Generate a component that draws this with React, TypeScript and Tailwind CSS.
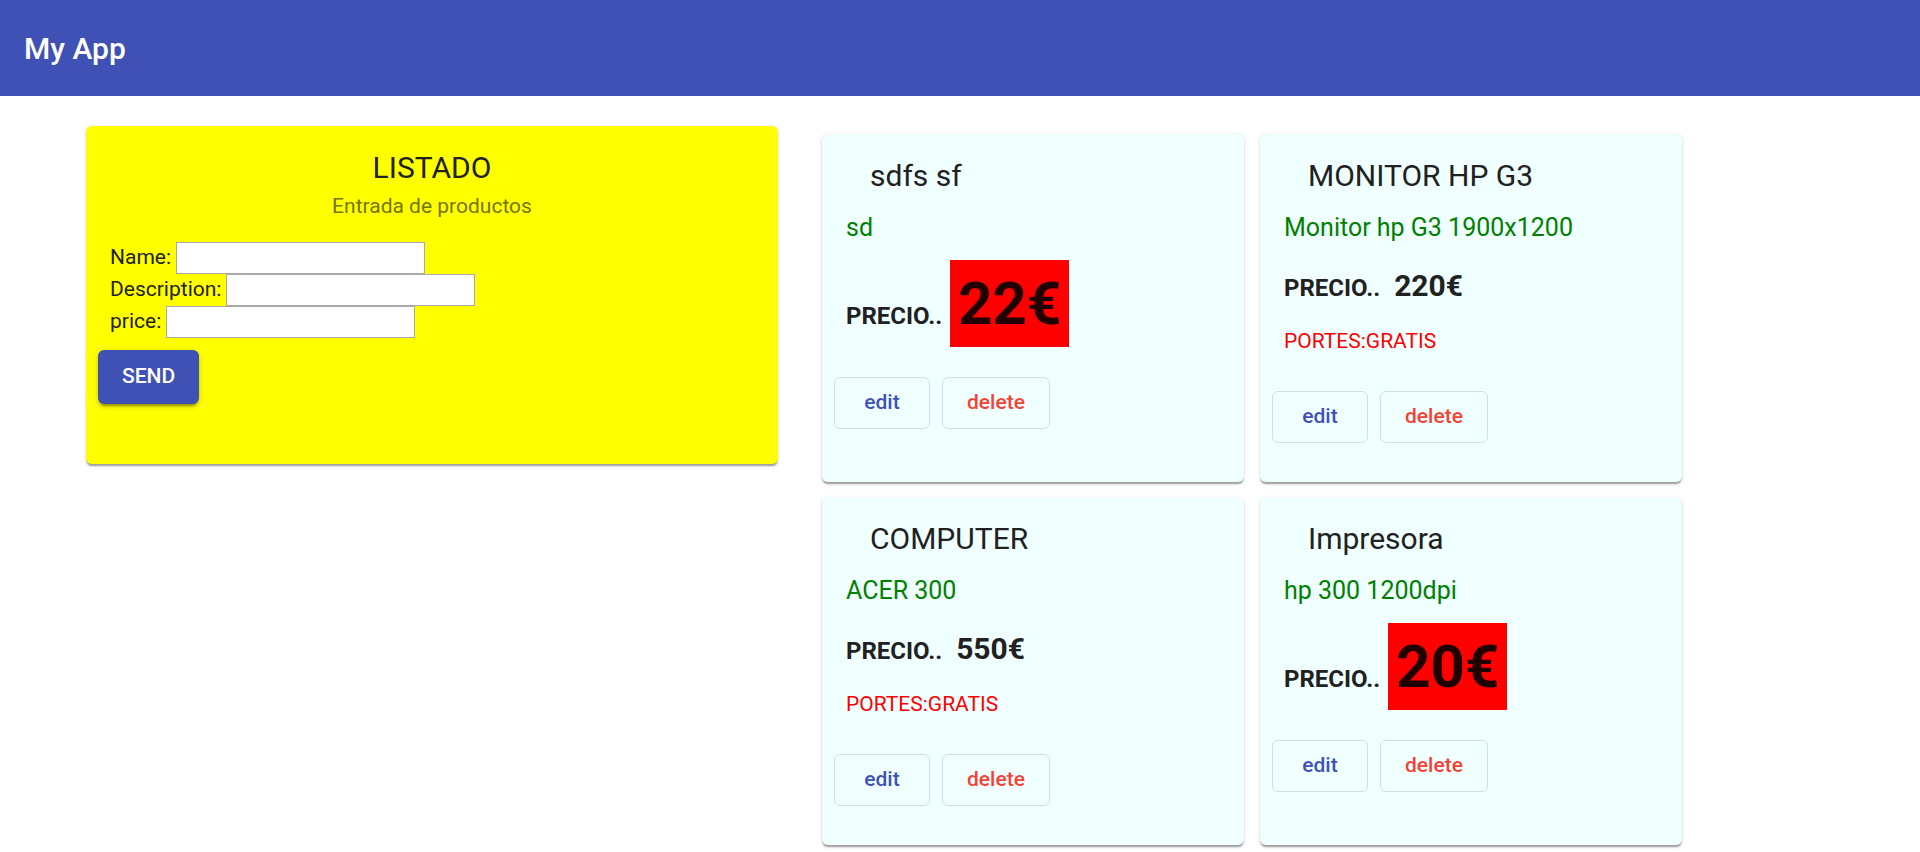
import { useState } from 'react'

type Product = {
  name: string
  description: string
  price: number
}

const initialProducts: Product[] = [
  { name: 'sdfs sf', description: 'sd', price: 22 },
  { name: 'MONITOR HP G3', description: 'Monitor hp G3 1900x1200', price: 220 },
  { name: 'COMPUTER', description: 'ACER 300', price: 550 },
  { name: 'Impresora', description: 'hp 300 1200dpi', price: 20 },
]

const ProductCard = ({ product }: { product: Product }) => {
  const cheap = product.price < 100

  return (
    <div className="flex flex-col rounded-[6px] bg-[#f0ffff] pt-[24px] pb-[39px] shadow-[0_3px_1.5px_-1.5px_rgba(0,0,0,0.2),0_1.5px_1.5px_0_rgba(0,0,0,0.14),0_1.5px_4.5px_0_rgba(0,0,0,0.12)]">
      <div className="ml-[48px] text-[30px] leading-[36px] text-[#212121]">
        {product.name}
      </div>
      <div className="mt-[20px] ml-[24px] text-[25px] leading-[28px] text-[#008000]">
        {product.description}
      </div>
      <div className="mt-[26px] ml-[24px] text-[24px] leading-[normal] font-bold text-[#212121]">
        PRECIO..{' '}
        {cheap ? (
          <span className="ml-[2px] bg-[#ff0000] px-[8px] py-[8px] text-[60px] leading-[normal] text-[#210000]">
            {product.price}€
          </span>
        ) : (
          <span className="ml-[8px] text-[30px] leading-[normal]">{product.price}€</span>
        )}
      </div>
      {!cheap && (
        <div className="mt-[26px] ml-[24px] text-[21px] leading-[normal] text-[#ff0000]">
          PORTES:GRATIS
        </div>
      )}
      <div className="mt-[38px] flex gap-[12px] pl-[12px]">
        <button className="h-[52px] min-w-[96px] rounded-[6px] border border-[#d3e0e0] px-[24px] text-[21px] font-medium text-[#3f51b5]">
          edit
        </button>
        <button className="h-[52px] min-w-[96px] rounded-[6px] border border-[#d3e0e0] px-[24px] text-[21px] font-medium text-[#f44336]">
          delete
        </button>
      </div>
    </div>
  )
}

export default function App() {
  const [products] = useState<Product[]>(initialProducts)
  const [name, setName] = useState('')
  const [description, setDescription] = useState('')
  const [price, setPrice] = useState('')

  return (
    <div className="min-h-screen bg-white [font-family:Roboto,sans-serif]">
      <header className="flex h-[96px] items-center bg-[#3f51b5] px-[24px]">
        <span className="text-[30px] font-medium text-white">My App</span>
      </header>

      <main className="flex items-start gap-[44px] pl-[86px]">
        <div className="mt-[30px] h-[338px] w-[692px] rounded-[6px] bg-[#ffff00] px-[12px] pt-[24px] shadow-[0_3px_1.5px_-1.5px_rgba(0,0,0,0.2),0_1.5px_1.5px_0_rgba(0,0,0,0.14),0_1.5px_4.5px_0_rgba(0,0,0,0.12)]">
          <div className="text-center text-[30px] leading-[36px] text-[#212121]">LISTADO</div>
          <div className="mt-[8px] text-center text-[21px] leading-[24px] text-[#757500]">
            Entrada de productos
          </div>

          <form className="mt-[24px]" onSubmit={(e) => e.preventDefault()}>
            <div className="pl-[12px] text-[21px] text-[#212121]">
              <div className="flex h-[32px] items-center gap-[5px]">
                <span>Name:</span>
                <input
                  value={name}
                  onChange={(e) => setName(e.target.value)}
                  className="h-[32px] w-[249px] border border-[#a9a9a9] bg-white px-1 text-[20px]"
                />
              </div>
              <div className="flex h-[32px] items-center gap-[5px]">
                <span>Description:</span>
                <input
                  value={description}
                  onChange={(e) => setDescription(e.target.value)}
                  className="h-[32px] w-[249px] border border-[#a9a9a9] bg-white px-1 text-[20px]"
                />
              </div>
              <div className="flex h-[32px] items-center gap-[5px]">
                <span>price:</span>
                <input
                  value={price}
                  onChange={(e) => setPrice(e.target.value)}
                  className="h-[32px] w-[249px] border border-[#a9a9a9] bg-white px-1 text-[20px]"
                />
              </div>
            </div>
            <button
              type="submit"
              className="mt-[12px] h-[54px] min-w-[96px] rounded-[6px] bg-[#3f51b5] px-[24px] text-[21px] font-medium text-white shadow-[0_4.5px_1.5px_-3px_rgba(0,0,0,0.2),0_3px_3px_0_rgba(0,0,0,0.14),0_1.5px_7.5px_0_rgba(0,0,0,0.12)]"
            >
              SEND
            </button>
          </form>
        </div>

        <div className="mt-[38px] grid grid-cols-[422px_422px] gap-x-[16px] gap-y-[15px] pb-[8px]">
          {products.map((p) => (
            <ProductCard key={p.name} product={p} />
          ))}
        </div>
      </main>
    </div>
  )
}
